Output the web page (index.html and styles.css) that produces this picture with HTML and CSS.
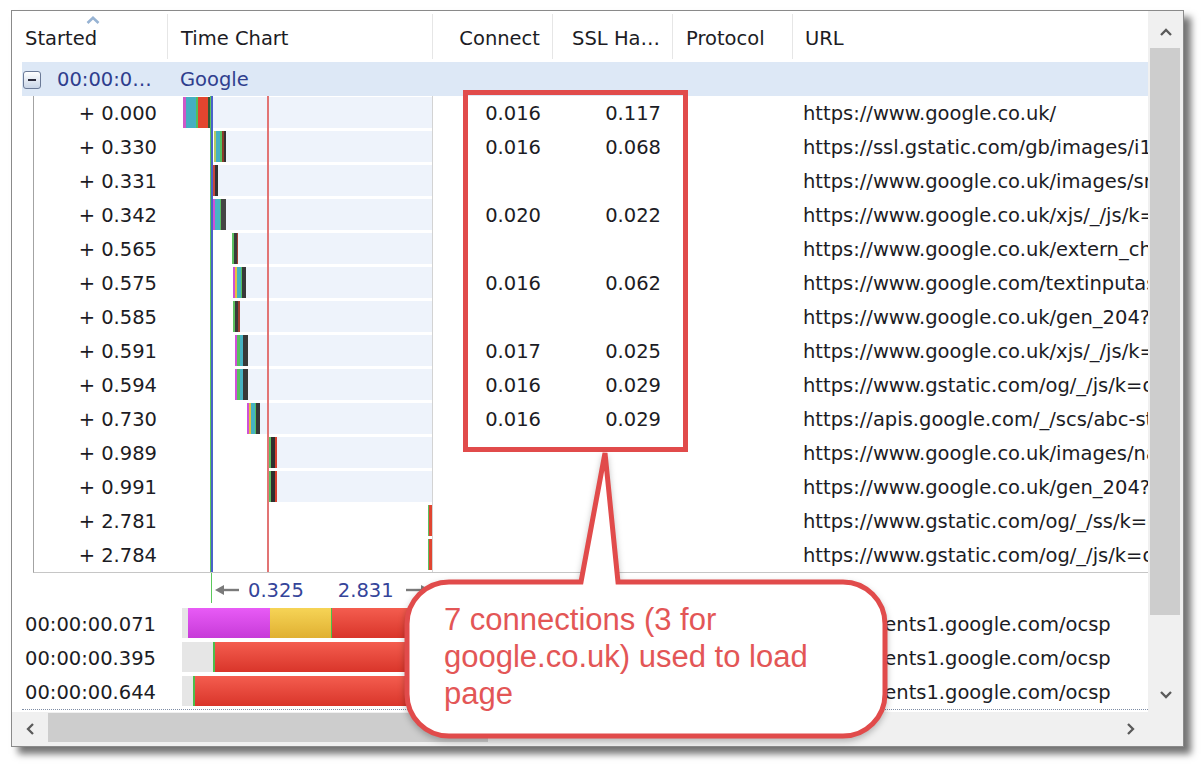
FILE: index.html
```html
<!DOCTYPE html>
<html>
<head>
<meta charset="utf-8">
<link rel="stylesheet" href="styles.css">
</head>
<body>
<div class="window">
  <div class="main">
    <div class="header">
      <div class="hcell">Started<svg class="sort" width="14" height="8" viewBox="0 0 14 8"><polyline points="1.5,7 7,1.8 12.5,7" fill="none" stroke="#97b3d3" stroke-width="2.6"/></svg></div>
      <div class="hcell">Time Chart</div>
      <div class="hcell r">Connect</div>
      <div class="hcell r">SSL Ha…</div>
      <div class="hcell">Protocol</div>
      <div class="hcell last">URL</div>
    </div>
    <div class="group">
      <div class="gfirst"><span class="minus"><span></span></span><span>00:00:0…</span></div>
      <div class="gname">Google</div>
    </div>
    <div class="children">
      <div class="row"><div class="num">+ 0.000</div><div class="chart"><div class="track" style="left:15px"></div><div class="bar p-a" style="left:15px;width:28px"></div></div><div class="num2">0.016</div><div class="num2">0.117</div><div></div><div class="url">https://www.google.co.uk/</div></div>
      <div class="row"><div class="num">+ 0.330</div><div class="chart"><div class="track" style="left:46px"></div><div class="bar p-b" style="left:46px;width:12px"></div></div><div class="num2">0.016</div><div class="num2">0.068</div><div></div><div class="url">https://ssl.gstatic.com/gb/images/i1_1967ca6a.png</div></div>
      <div class="row"><div class="num">+ 0.331</div><div class="chart"><div class="track" style="left:45px"></div><div class="bar p-c" style="left:45px;width:5px"></div></div><div class="num2"></div><div class="num2"></div><div></div><div class="url">https://www.google.co.uk/images/srpr/logo11w.png</div></div>
      <div class="row"><div class="num">+ 0.342</div><div class="chart"><div class="track" style="left:45px"></div><div class="bar p-d" style="left:45px;width:13px"></div></div><div class="num2">0.020</div><div class="num2">0.022</div><div></div><div class="url">https://www.google.co.uk/xjs/_/js/k=xjs.hp.en_GB</div></div>
      <div class="row"><div class="num">+ 0.565</div><div class="chart"><div class="track" style="left:64px"></div><div class="bar p-e" style="left:64px;width:6px"></div></div><div class="num2"></div><div class="num2"></div><div></div><div class="url">https://www.google.co.uk/extern_chrome/ffa94c9219</div></div>
      <div class="row"><div class="num">+ 0.575</div><div class="chart"><div class="track" style="left:65px"></div><div class="bar p-f" style="left:65px;width:13px"></div></div><div class="num2">0.016</div><div class="num2">0.062</div><div></div><div class="url">https://www.google.com/textinputassistant/tia.png</div></div>
      <div class="row"><div class="num">+ 0.585</div><div class="chart"><div class="track" style="left:65px"></div><div class="bar p-e" style="left:65px;width:7px"></div></div><div class="num2"></div><div class="num2"></div><div></div><div class="url">https://www.google.co.uk/gen_204?v=3&amp;s=webhp</div></div>
      <div class="row"><div class="num">+ 0.591</div><div class="chart"><div class="track" style="left:67px"></div><div class="bar p-g" style="left:67px;width:13px"></div></div><div class="num2">0.017</div><div class="num2">0.025</div><div></div><div class="url">https://www.google.co.uk/xjs/_/js/k=xjs.hp.en_GB</div></div>
      <div class="row"><div class="num">+ 0.594</div><div class="chart"><div class="track" style="left:67px"></div><div class="bar p-g" style="left:67px;width:13px"></div></div><div class="num2">0.016</div><div class="num2">0.029</div><div></div><div class="url">https://www.gstatic.com/og/_/js/k=og.og2.en_US</div></div>
      <div class="row"><div class="num">+ 0.730</div><div class="chart"><div class="track" style="left:79px"></div><div class="bar p-f" style="left:79px;width:13px"></div></div><div class="num2">0.016</div><div class="num2">0.029</div><div></div><div class="url">https://apis.google.com/_/scs/abc-static/_/js/k=gapi</div></div>
      <div class="row"><div class="num">+ 0.989</div><div class="chart"><div class="track" style="left:101px"></div><div class="bar p-h" style="left:101px;width:8px"></div></div><div class="num2"></div><div class="num2"></div><div></div><div class="url">https://www.google.co.uk/images/nav_logo195.png</div></div>
      <div class="row"><div class="num">+ 0.991</div><div class="chart"><div class="track" style="left:101px"></div><div class="bar p-h" style="left:101px;width:8px"></div></div><div class="num2"></div><div class="num2"></div><div></div><div class="url">https://www.google.co.uk/gen_204?atyp=i&amp;ct=1</div></div>
      <div class="row"><div class="num">+ 2.781</div><div class="chart"><div class="bar p-i" style="left:260px;width:4px"></div></div><div class="num2"></div><div class="num2"></div><div></div><div class="url">https://www.gstatic.com/og/_/ss/k=og.og2.en_US</div></div>
      <div class="row"><div class="num">+ 2.784</div><div class="chart"><div class="bar p-i" style="left:260px;width:4px"></div></div><div class="num2"></div><div class="num2"></div><div></div><div class="url">https://www.gstatic.com/og/_/js/k=og.og2.en_US</div></div>
      <div class="vl-blue"></div>
      <div class="vl-red"></div>
    </div>
    <div class="axis">
      <div></div>
      <div class="axis-chart">
        <div class="vl-green"></div>
        <svg class="arr-l" width="25" height="12" viewBox="0 0 25 12"><polygon points="0,6 9,1 9,11" fill="#7a7a7a"/><line x1="8" y1="6" x2="24" y2="6" stroke="#7a7a7a" stroke-width="2.4"/></svg>
        <span class="t1">0.325</span>
        <span class="t2">2.831</span>
        <svg class="arr-r" width="25" height="12" viewBox="0 0 25 12"><polygon points="25,6 16,1 16,11" fill="#7a7a7a"/><line x1="1" y1="6" x2="17" y2="6" stroke="#7a7a7a" stroke-width="2.4"/></svg>
      </div>
    </div>
    <div class="conn">
      <div class="cstart">00:00:00.071</div>
      <div class="cchart"><div class="cbar"><div class="s-gray" style="width:6px"></div><div class="s-mag" style="width:82px"></div><div class="s-yel" style="width:61px"></div><div class="s-grn" style="width:1px"></div><div class="s-red"></div></div></div>
      <div></div><div></div><div></div>
      <div class="url">http://clients1.google.com/ocsp</div>
    </div>
    <div class="conn">
      <div class="cstart">00:00:00.395</div>
      <div class="cchart"><div class="cbar"><div class="s-gray" style="width:31px"></div><div class="s-grn" style="width:2px"></div><div class="s-red"></div></div></div>
      <div></div><div></div><div></div>
      <div class="url">http://clients1.google.com/ocsp</div>
    </div>
    <div class="conn">
      <div class="cstart">00:00:00.644</div>
      <div class="cchart"><div class="cbar"><div class="s-gray" style="width:11px"></div><div class="s-grn" style="width:2px"></div><div class="s-red"></div></div></div>
      <div></div><div></div><div></div>
      <div class="url">http://clients1.google.com/ocsp</div>
    </div>
    <div class="dots"></div>
  </div>
  <div class="vscroll">
    <div class="sbtn up"><svg width="12" height="8" viewBox="0 0 12 8"><polyline points="1,7 6,2 11,7" fill="none" stroke="#5a5a5a" stroke-width="2.3"/></svg></div>
    <div class="vthumb"></div>
    <div class="vspace"></div>
    <div class="sbtn"><svg width="12" height="8" viewBox="0 0 12 8"><polyline points="1,1 6,6 11,1" fill="none" stroke="#5a5a5a" stroke-width="2.3"/></svg></div>
  </div>
  <div class="hscroll">
    <div class="hbtn"><svg width="8" height="12" viewBox="0 0 8 12"><polyline points="7,1 2,6 7,11" fill="none" stroke="#5a5a5a" stroke-width="2.3"/></svg></div>
    <div class="hthumb"></div>
    <div class="hspace"></div>
    <div class="hbtn"><svg width="8" height="12" viewBox="0 0 8 12"><polyline points="1,1 6,6 1,11" fill="none" stroke="#5a5a5a" stroke-width="2.3"/></svg></div>
  </div>
  <div class="corner"></div>
</div>

<svg class="annot" width="1202" height="770" viewBox="0 0 1202 770">
  <rect x="465.5" y="92.5" width="220" height="357" fill="none" stroke="#e14b4b" stroke-width="5"/>
  <path class="bubble" d="M 581 582 L 605 453 L 618 582 L 843 582 A 42 42 0 0 1 885 624 L 885 694 A 42 42 0 0 1 843 736 L 449 736 A 42 42 0 0 1 407 694 L 407 624 A 42 42 0 0 1 449 582 Z" fill="#fff" stroke="#e14b4b" stroke-width="5" stroke-linejoin="miter"/>
</svg>
<div class="callout-text">7 connections (3 for<br>google.co.uk) used to load<br>page</div>
</body>
</html>
```
FILE: styles.css
```css
* { box-sizing: border-box; }
html, body { margin: 0; padding: 0; background: #fff; }
body {
  width: 1202px;
  height: 770px;
  position: relative;
  overflow: hidden;
  padding: 10px 0 0 11px;
  font-family: "DejaVu Sans", Verdana, sans-serif;
  font-size: 19.5px;
  color: #1c1c24;
}
.window {
  width: 1173px;
  height: 737px;
  border: 1px solid #8a8a8a;
  background: #fff;
  display: grid;
  grid-template-columns: 1136px 35px;
  grid-template-rows: 701px 34px;
  box-shadow: 7px 7px 7px rgba(0, 0, 0, 0.55);
}
.main { overflow: hidden; position: relative; }

.header {
  display: grid;
  grid-template-columns: 156px 265px 120px 120px 120px 1fr;
  height: 51px;
  padding-top: 3px;
}
.hcell {
  display: flex;
  align-items: center;
  padding: 3px 12px 0 13px;
  margin-bottom: 3px;
  border-right: 1px solid #e6e6e6;
  position: relative;
  white-space: nowrap;
}
.hcell.r { justify-content: flex-end; }
.hcell.last { border-right: none; padding-left: 12px; }
.sort { position: absolute; left: 74px; top: 2px; }

.group {
  margin-left: 10px;
  height: 34px;
  background: #dde8f6;
  display: grid;
  grid-template-columns: 146px 1fr;
  align-items: center;
  color: #2f3e8e;
  padding-top: 1px;
}
.gfirst { display: flex; align-items: center; gap: 16px; padding-left: 1px; white-space: nowrap; }
.minus {
  width: 18px;
  height: 18px;
  border: 1px solid #6b7a97;
  border-radius: 3px;
  background: linear-gradient(#ffffff, #c9d5e7);
  display: flex;
  align-items: center;
  justify-content: center;
}
.minus span { width: 8px; height: 2px; background: #2c2c3c; }
.gname { padding-left: 12px; }

.children {
  margin-left: 21px;
  border-left: 1px solid #a3a3a3;
  border-bottom: 1px solid #c6c6c6;
  position: relative;
}
.row {
  display: grid;
  grid-template-columns: 134px 265px 120px 120px 120px 1fr;
  height: 34px;
  align-items: center;
}
.num { text-align: right; padding-right: 11px; white-space: nowrap; }
.num2 { text-align: right; padding-right: 12px; }
.url { padding-left: 10px; white-space: nowrap; overflow: hidden; }
.chart {
  position: relative;
  height: 100%;
  border-right: 1px solid #d3d3d3;
}
.track { position: absolute; top: 1px; height: 31px; right: 0; background: #eef3fb; }
.bar { position: absolute; top: 1px; height: 31px; }

.p-a { background: linear-gradient(to right, #cf58c8 0 12%, #45afc2 12% 48%, #52c05c 48% 54%, #e2452f 54% 88%, #2f5a35 88%); }
.p-b { background: linear-gradient(to right, #b7cb62 0 16%, #46b2c2 16% 52%, #55c060 52% 64%, #8a3a2a 64% 80%, #333 80%); }
.p-c { background: linear-gradient(to right, #c7473c 0 45%, #333 45%); }
.p-d { background: linear-gradient(to right, #d050d8 0 14%, #48b4c4 14% 50%, #55c060 50% 62%, #444 62%); }
.p-e { background: linear-gradient(to right, #5cc060 0 30%, #3a3a3a 30% 75%, #a04030 75%); }
.p-f { background: linear-gradient(to right, #d050d8 0 17%, #e6c040 17% 32%, #46b2c2 32% 60%, #55c060 60% 72%, #383838 72%); }
.p-g { background: linear-gradient(to right, #d050d8 0 18%, #55c060 18% 40%, #46b2c2 40% 65%, #383838 65%); }
.p-h { background: linear-gradient(to right, #5cc060 0 22%, #2f2f2f 22% 70%, #d84030 70%); }
.p-i { background: linear-gradient(to right, #5cc060 0 30%, #e04530 30%); }

.vl-blue {
  position: absolute;
  top: 0;
  bottom: 0;
  left: 176px;
  width: 3px;
  background: linear-gradient(to right, #5cc45c 0 1px, #4a62c8 1px);
}
.vl-red {
  position: absolute;
  top: 0;
  bottom: 0;
  left: 233px;
  width: 2px;
  background: #e27474;
}

.axis {
  display: grid;
  grid-template-columns: 156px 265px;
  height: 34px;
}
.axis-chart {
  position: relative;
  display: flex;
  align-items: center;
  padding-left: 47px;
  color: #34449a;
}
.vl-green { position: absolute; left: 43px; top: 0; height: 30px; width: 1px; background: #5cc85c; }
.arr-l { margin-right: 8px; }
.t1 { margin-right: 34px; }
.t2 { margin-right: 11px; }

.conn {
  display: grid;
  grid-template-columns: 156px 265px 120px 120px 120px 1fr;
  height: 34px;
  align-items: center;
}
.cstart { padding-left: 13px; white-space: nowrap; }
.cchart { height: 100%; padding: 1px 0 3px 14px; }
.cbar { display: flex; height: 30px; width: 251px; }
.s-gray { background: #e6e6e6; }
.s-mag { background: linear-gradient(#e85bf6, #c73bd8); }
.s-yel { background: linear-gradient(#f6d456, #e0b032); }
.s-grn { background: #4cbf4c; }
.s-red { flex: 1; background: linear-gradient(#f45d4f, #d9352a); }
.dots { margin-left: 10px; border-top: 1px dotted #7f8da5; }

.vscroll {
  grid-row: 1;
  grid-column: 2;
  background: #f0f0f0;
  display: flex;
  flex-direction: column;
}
.sbtn { height: 35px; display: flex; align-items: center; justify-content: center; flex: none; }
.sbtn.up { padding-top: 6px; }
.vthumb { margin: 2px 3px 0 2px; height: 567px; background: #cdcdcd; flex: none; }
.vspace { flex: 1; }

.hscroll {
  grid-row: 2;
  grid-column: 1;
  background: #f0f0f0;
  display: flex;
}
.hbtn { width: 35px; display: flex; align-items: center; justify-content: center; flex: none; }
.hthumb { margin: 1px 0 4px 1px; width: 440px; background: #cdcdcd; flex: none; }
.hspace { flex: 1; }
.corner { grid-row: 2; grid-column: 2; background: #f0f0f0; }

.annot { position: absolute; left: 0; top: 0; pointer-events: none; }
.bubble { filter: drop-shadow(0 3px 3px rgba(0, 0, 0, 0.25)); }
.callout-text {
  position: absolute;
  left: 444px;
  top: 601px;
  font-family: "Liberation Sans", Arial, sans-serif;
  font-size: 31px;
  line-height: 37px;
  color: #e35656;
  white-space: nowrap;
}
```
